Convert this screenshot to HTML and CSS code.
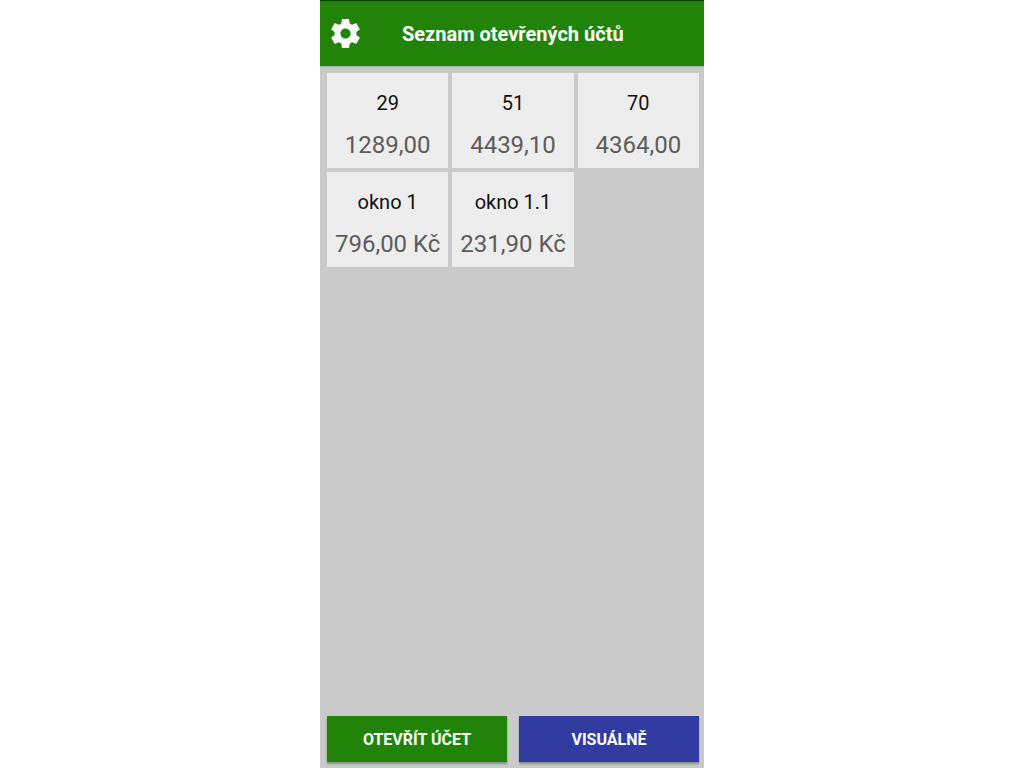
FILE: index.html
```html
<!DOCTYPE html>
<html lang="cs">

<head>
    <meta charset="UTF-8">
    <meta name="viewport" content="width=device-width, initial-scale=1.0">
    <title>Seznam otevřených účtů</title>
    <link rel="stylesheet" href="styles.css">
</head>

<body>
    <div class="app">
        <header class="topbar">
            <button class="settings" type="button" aria-label="Nastavení">
                <svg viewBox="0 0 24 24" width="35" height="35" fill="currentColor" aria-hidden="true">
                    <path d="M19.43 12.98c.04-.32.07-.64.07-.98s-.03-.66-.07-.98l2.11-1.65c.19-.15.24-.42.12-.64l-2-3.46c-.12-.22-.39-.3-.61-.22l-2.49 1c-.52-.4-1.08-.73-1.69-.98l-.38-2.65C14.46 2.18 14.25 2 14 2h-4c-.25 0-.46.18-.49.42l-.38 2.65c-.61.25-1.17.59-1.69.98l-2.49-1c-.23-.09-.49 0-.61.22l-2 3.46c-.13.22-.07.49.12.64l2.11 1.65c-.04.32-.07.65-.07.98s.03.66.07.98l-2.11 1.65c-.19.15-.24.42-.12.64l2 3.46c.12.22.39.3.61.22l2.49-1c.52.4 1.08.73 1.69.98l.38 2.65c.03.24.24.42.49.42h4c.25 0 .46-.18.49-.42l.38-2.65c.61-.25 1.17-.59 1.69-.98l2.49 1c.23.09.49 0 .61-.22l2-3.46c.12-.22.07-.49-.12-.64l-2.11-1.65zM12 15.5c-1.93 0-3.5-1.57-3.5-3.5s1.57-3.5 3.5-3.5 3.5 1.57 3.5 3.5-1.57 3.5-3.5 3.5z"/>
                </svg>
            </button>
            <h1>Seznam otevřených účtů</h1>
        </header>
        <main class="accounts">
            <button class="account" type="button">
                <span class="name">29</span>
                <span class="amount">1289,00</span>
            </button>
            <button class="account" type="button">
                <span class="name">51</span>
                <span class="amount">4439,10</span>
            </button>
            <button class="account" type="button">
                <span class="name">70</span>
                <span class="amount">4364,00</span>
            </button>
            <button class="account" type="button">
                <span class="name">okno 1</span>
                <span class="amount">796,00 Kč</span>
            </button>
            <button class="account" type="button">
                <span class="name">okno 1.1</span>
                <span class="amount">231,90 Kč</span>
            </button>
        </main>
        <footer class="actions">
            <button class="action" type="button">OTEVŘÍT ÚČET</button>
            <button class="action visual" type="button">VISUÁLNĚ</button>
        </footer>
    </div>
</body>

</html>
```
FILE: styles.css
```css
* {
    box-sizing: border-box;
}

body {
    margin: 0;
    background-color: white;
    font-family: Roboto, sans-serif;
}

button {
    font-family: inherit;
    border: none;
    cursor: pointer;
}

.app {
    display: flex;
    flex-direction: column;
    max-width: 384px;
    min-height: 100vh;
    margin: 0 auto;
    background-color: #cacaca;
}

.topbar {
    display: flex;
    align-items: center;
    gap: 39px;
    padding: 15px 8px;
    border-top: 1px solid #0b3a05;
    background-color: #218409;
    color: white;
    box-shadow: 0 1px 1px rgba(0, 0, 0, 0.1);
}

.settings {
    display: flex;
    padding: 0;
    background: none;
    color: inherit;
}

h1 {
    margin: 0;
    font-size: 20px;
    font-weight: 700;
    line-height: 24px;
}

.accounts {
    flex: 1;
    display: grid;
    grid-template-columns: repeat(3, 1fr);
    align-content: start;
    gap: 4px;
    padding: 7px 5px 7px 7px;
}

.account {
    display: flex;
    flex-direction: column;
    align-items: center;
    gap: 16px;
    padding: 18px 0 9px;
    background-color: #ededed;
    white-space: nowrap;
}

.name {
    color: #111;
    font-size: 20px;
    line-height: 24px;
}

.amount {
    color: #5c5c5c;
    font-size: 24px;
    line-height: 28px;
}

.actions {
    display: grid;
    grid-template-columns: 1fr 1fr;
    gap: 12px;
    padding: 0 5px 6px 7px;
}

.action {
    padding: 14px 0 12px;
    background-color: #218409;
    color: white;
    font-size: 16px;
    font-weight: 700;
    line-height: 20px;
    box-shadow: 0 2px 2px rgba(0, 0, 0, 0.3);
}

.visual {
    background-color: #303c9f;
}
```
